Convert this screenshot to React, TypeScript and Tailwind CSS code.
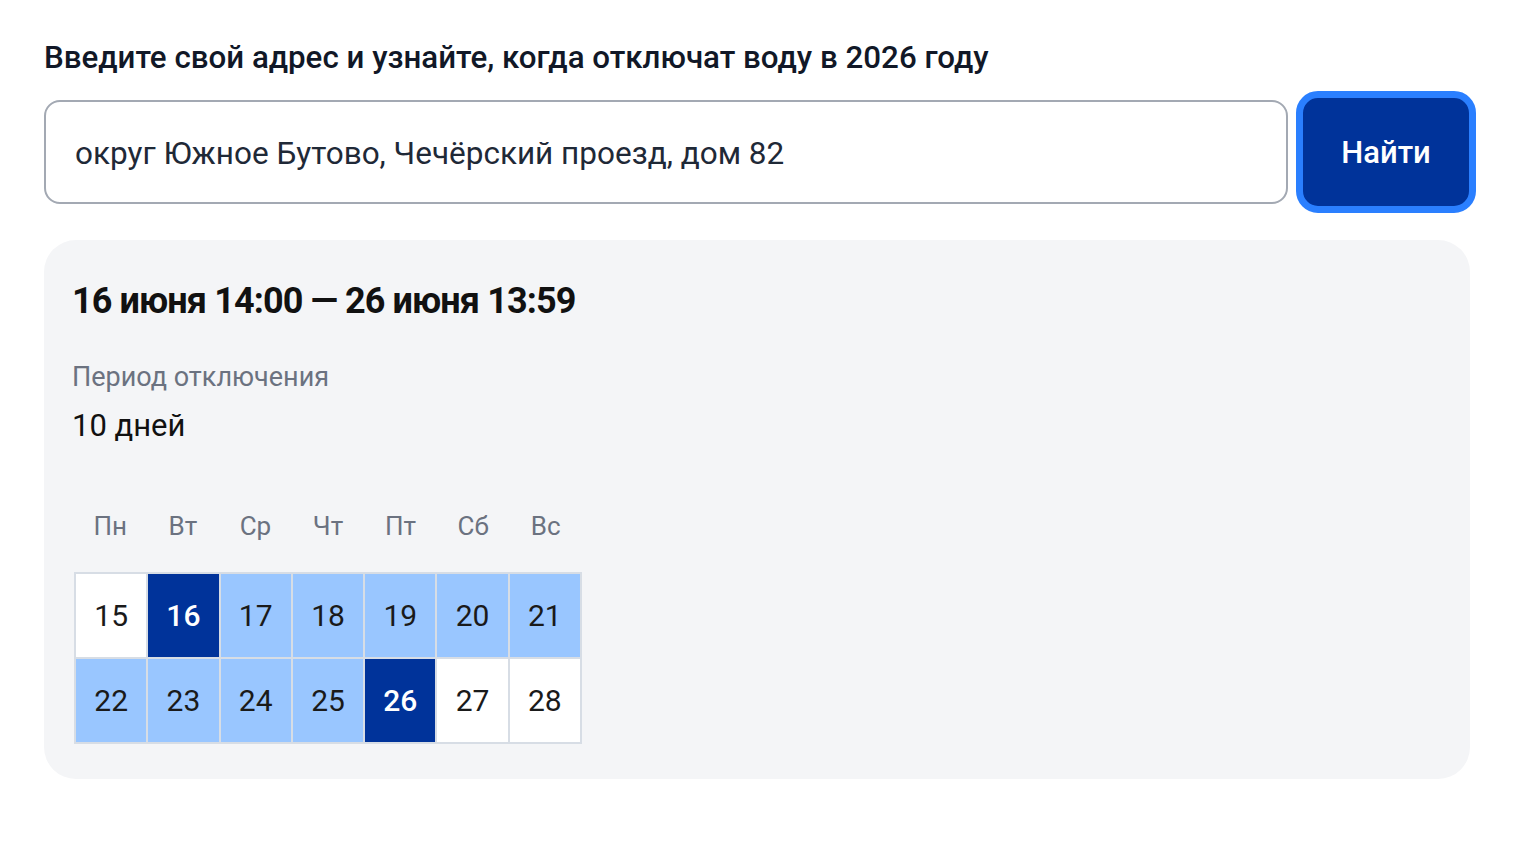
const days = [
  [15, "none"],
  [16, "edge"],
  [17, "mid"],
  [18, "mid"],
  [19, "mid"],
  [20, "mid"],
  [21, "mid"],
  [22, "mid"],
  [23, "mid"],
  [24, "mid"],
  [25, "mid"],
  [26, "edge"],
  [27, "none"],
  [28, "none"],
] as const

const weekdays = ["Пн", "Вт", "Ср", "Чт", "Пт", "Сб", "Вс"]

function DayCell({ day, kind }: { day: number; kind: "none" | "edge" | "mid" }) {
  const tone =
    kind === "edge"
      ? "bg-[#00339a] text-white font-medium"
      : kind === "mid"
        ? "bg-[#99c6ff] text-[#1a1a1a]"
        : "bg-white text-[#1a1a1a]"
  return (
    <div className={`flex h-[85px] items-center justify-center text-[30px] outline outline-2 outline-[#d7dde5] -outline-offset-1 ${tone}`}>
      {day}
    </div>
  )
}

export default function App() {
  return (
    <div className="min-h-[846px] bg-white px-[44px] pt-[38px] font-['Roboto','Liberation_Sans',sans-serif] text-[#111827]">
      <h1 className="text-[31.3px] font-medium leading-[40px]">
        Введите свой адрес и узнайте, когда отключат воду в 2026 году
      </h1>

      <div className="mt-[13px] flex items-center gap-[8px]">
        <div className="flex h-[104px] flex-1 items-center rounded-[16px] border-2 border-[#a3a9b3] bg-white px-[29px] pt-[3px] text-[31.5px] text-[#1f2937]">
          округ Южное Бутово, Чечёрский проезд, дом 82
        </div>
        <button className="h-[122px] w-[180px] rounded-[22px] border-[7px] border-[#2a7fff] bg-[#00339a] pt-[2px] text-[31px] font-medium text-white">
          Найти
        </button>
      </div>

      <div className="mt-[27px] mr-[6px] h-[539px] rounded-[32px] bg-[#f4f5f7] px-[28px] pt-[38px]">
        <div className="text-[36px] font-bold leading-[46px] tracking-[-0.9px] text-[#111]">
          16 июня 14:00 — 26 июня 13:59
        </div>
        <div className="mt-[35px] text-[27px] leading-[36px] text-[#6b7280]">Период отключения</div>
        <div className="mt-[11px] text-[31px] leading-[40px] text-[#111]">10 дней</div>

        <div className="mt-[60px] ml-[2px] w-[508px]">
          <div className="grid grid-cols-7 text-center text-[26px] leading-[40px] text-[#6b7280]">
            {weekdays.map((w) => (
              <div key={w}>{w}</div>
            ))}
          </div>
          <div className="mt-[26px] grid grid-cols-7 border border-[#d7dde5]">
            {days.map(([d, k]) => (
              <DayCell key={d} day={d} kind={k} />
            ))}
          </div>
        </div>
      </div>
    </div>
  )
}
